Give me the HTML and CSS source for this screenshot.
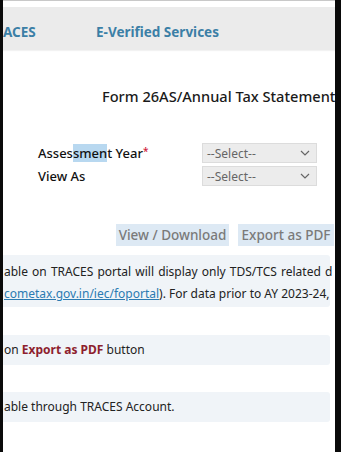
FILE: index.html
```html
<!DOCTYPE html>
<html>
<head>
<meta charset="utf-8">
<link rel="stylesheet" href="styles.css">
</head>
<body>
<div class="frame">
  <div class="edge-left"></div>
  <div class="page">
    <div class="topline"></div>
    <div class="nav">
      <span class="nav-item first">ACES</span>
      <span class="nav-item second">E-Verified Services</span>
    </div>
    <h1 class="title">Form 26AS/Annual Tax Statement</h1>
    <div class="form">
      <div class="form-row">
        <label class="label">Asses<span class="sel">smen</span>t Year<span class="req">*</span></label>
        <div class="select"><span>--Select--</span><svg class="chev" viewBox="0 0 10 6" width="10" height="6"><path d="M1 1 L5 5 L9 1" fill="none" stroke="#666" stroke-width="1.2"/></svg></div>
      </div>
      <div class="form-row">
        <label class="label">View As</label>
        <div class="select"><span>--Select--</span><svg class="chev" viewBox="0 0 10 6" width="10" height="6"><path d="M1 1 L5 5 L9 1" fill="none" stroke="#666" stroke-width="1.2"/></svg></div>
      </div>
    </div>
    <div class="buttons">
      <span class="btn btn-view">View / Download</span>
      <span class="btn btn-export">Export as PDF</span>
    </div>
    <div class="info info-1">
      <p class="line wide">able on TRACES portal will display only TDS/TCS related d</p>
      <p class="line"><a class="link">cometax.gov.in/iec/foportal</a>). For data prior to AY 2023-24,</p>
    </div>
    <div class="info info-2">
      <p class="line">on <b class="red">Export as PDF</b> button</p>
    </div>
    <div class="info info-3">
      <p class="line">able through TRACES Account.</p>
    </div>
  </div>
  <div class="edge-right"></div>
</div>
</body>
</html>
```

FILE: styles.css
```css
html, body {
  margin: 0;
  padding: 0;
  background: #000;
}
.frame {
  display: flex;
  width: 341px;
  height: 452px;
  overflow: hidden;
  font-family: "Noto Sans", "Open Sans", sans-serif;
}
.edge-left {
  width: 3px;
  flex: none;
  background: #0a0a0a;
}
.edge-right {
  width: 6px;
  flex: none;
  background: #0a0a0a;
}
.page {
  flex: 1;
  background: #fff;
  overflow: hidden;
  display: flex;
  flex-direction: column;
}
.topline {
  height: 7px;
  border-top: 1px solid #c8c8c8;
  box-sizing: border-box;
}
.nav {
  height: 43px;
  background: #ebebeb;
  display: flex;
  align-items: center;
  padding-top: 7px;
  box-sizing: border-box;
  box-shadow: 0 1px 1px rgba(0,0,0,0.05);
}
.nav-item {
  font-size: 13.5px;
  font-weight: 700;
  color: #3b7fa6;
  white-space: nowrap;
}
.nav-item.first {
  margin-left: 0;
  width: 93px;
}
.title {
  margin: 35px 0 0 99px;
  font-size: 14.6px;
  font-weight: 500;
  color: #1a1a1a;
  white-space: nowrap;
  line-height: 22px;
}
.form {
  margin-top: 36px;
  display: flex;
  flex-direction: column;
  gap: 3px;
}
.form-row {
  display: flex;
  align-items: center;
  height: 20px;
}
.label {
  margin-left: 35px;
  width: 164px;
  font-size: 13px;
  font-weight: 500;
  color: #111;
  white-space: nowrap;
}
.sel {
  background: #b8d8f0;
}
.req {
  color: #d0203a;
  font-size: 10px;
  vertical-align: top;
}
.select {
  width: 115px;
  height: 20px;
  box-sizing: border-box;
  background: #ececec;
  border: 1px solid #dcdcdc;
  display: flex;
  align-items: center;
  justify-content: space-between;
  padding: 0 6px 0 4px;
  font-size: 12px;
  color: #666;
}
.chev {
  display: block;
}
.buttons {
  margin-top: 38px;
  display: flex;
  justify-content: flex-end;
  gap: 9px;
  padding-right: 1px;
}
.btn {
  height: 22px;
  display: flex;
  align-items: center;
  justify-content: center;
  background: #dde9f4;
  color: #7a7a7a;
  font-size: 13.5px;
  font-weight: 500;
  white-space: nowrap;
}
.btn-view { width: 113px; }
.btn-export { width: 96px; }
.info {
  background: #f0f4f8;
  margin-right: 5px;
  border-radius: 0 3px 3px 0;
}
.info-1 {
  margin-top: 9px;
  height: 52px;
  padding-top: 6px;
  box-sizing: border-box;
}
.info-2 {
  margin-top: 28px;
  height: 30px;
  display: flex;
  align-items: center;
}
.info-3 {
  margin-top: 27px;
  height: 30px;
  display: flex;
  align-items: center;
}
.line {
  margin: 0;
  font-size: 12px;
  line-height: 22px;
  color: #222;
  white-space: nowrap;
  padding-left: 1px;
}
.line.wide {
  word-spacing: 1px;
}
.link {
  color: #2b7bb2;
  text-decoration: underline;
}
.red {
  color: #8e1f2e;
  font-weight: 700;
}
```
